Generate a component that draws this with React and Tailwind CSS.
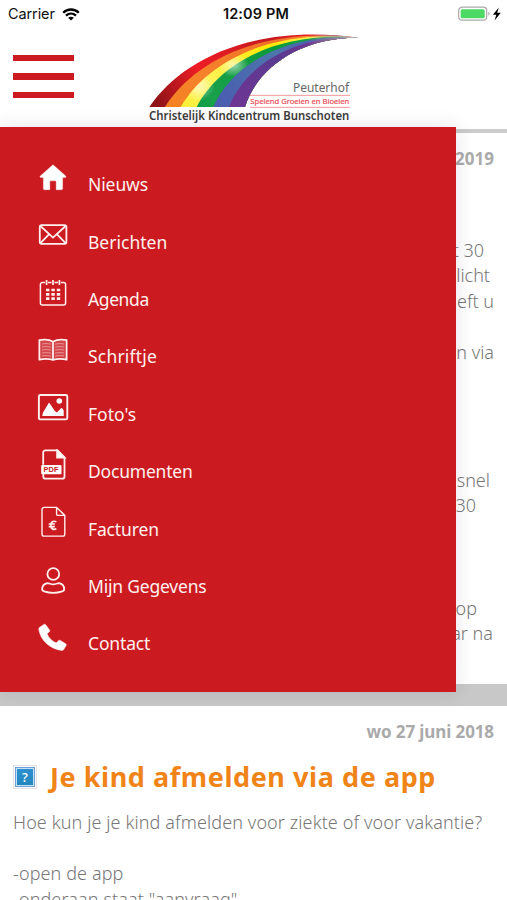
import { clsx } from "clsx";

const BANDS = [
  { id: "red", start: "M28 246C120 110 330 -6 655 38", from: "#8f1418", mid: "#ee1c25", to: "#c41a1f" },
  { id: "orange", start: "M75 246C158 114 355 2 655 38", from: "#f58220", mid: "#f5822a", to: "#f2702a" },
  { id: "yellow", start: "M122 246C197 117 380 10 655 38", from: "#ffec1a", mid: "#fff35c", to: "#ffe800" },
  { id: "green", start: "M170 246C235 120 405 17 655 38", from: "#009640", mid: "#18a04a", to: "#0c9a3c" },
  { id: "blue", start: "M220 246C273 123 430 24 655 38", from: "#3f57a8", mid: "#4a5bb0", to: "#4d76ac" },
  { id: "purple", start: "M267 246C312 127 455 30 655 38", from: "#8a35a0", mid: "#733494", to: "#5a3a90" },
];

function Logo() {
  return (
    <svg viewBox="0 0 690 306" className="h-[102px] w-[230px]">
      <defs>
        {BANDS.map((b) => (
          <linearGradient key={b.id} id={b.id} gradientUnits="userSpaceOnUse" x1="60" y1="250" x2="520" y2="20">
            <stop offset="0" stopColor={b.from} />
            <stop offset="0.3" stopColor={b.mid} />
            <stop offset="0.75" stopColor={b.to} />
            <stop offset="1" stopColor={b.mid} />
          </linearGradient>
        ))}
        <radialGradient id="shine">
          <stop offset="0" stopColor="#fff" stopOpacity="0.6" />
          <stop offset="1" stopColor="#fff" stopOpacity="0" />
        </radialGradient>
        <linearGradient id="tip" gradientUnits="userSpaceOnUse" x1="500" y1="0" x2="655" y2="0">
          <stop offset="0" stopColor="#999" stopOpacity="0" />
          <stop offset="0.6" stopColor="#999" stopOpacity="0.8" />
          <stop offset="1" stopColor="#ccc" />
        </linearGradient>
        <clipPath id="glow">
          <path d="M122 246C197 117 380 10 655 38C430 24 273 123 220 246Z" />
        </clipPath>
      </defs>
      {BANDS.map((b) => (
        <path key={b.id} d={`${b.start}C480 36 350 130 315 246Z`} fill={`url(#${b.id})`} />
      ))}
      <g clipPath="url(#glow)">
        <ellipse cx="175" cy="185" rx="48" ry="42" fill="url(#shine)" />
        <ellipse cx="280" cy="120" rx="46" ry="36" fill="url(#shine)" />
      </g>
      <path d="M28 246C120 110 330 -6 655 38C480 36 350 130 315 246Z" fill="url(#tip)" />
      <g fontFamily="'Noto Sans', sans-serif">
        <text x="459" y="200" fontSize="39" fill="#666" textLength="168" lengthAdjust="spacingAndGlyphs">
          Peuterhof
        </text>
        <path d="M330 211H630M330 247H630" stroke="#f0838a" strokeWidth="2.5" />
        <text x="331" y="237" fontSize="23" fill="#e8505a" stroke="#e8505a" strokeWidth="0.6" textLength="297" lengthAdjust="spacingAndGlyphs">
          Spelend Groeien en Bloeien
        </text>
        <text x="27" y="286" fontSize="36" fontWeight="600" fill="#3c3c3c" textLength="601" lengthAdjust="spacingAndGlyphs">
          Christelijk Kindcentrum Bunschoten
        </text>
      </g>
    </svg>
  );
}

function StatusBar() {
  return (
    <div className="grid h-7 grid-cols-3 items-center pr-[5px] pl-2 font-['Inter',sans-serif] text-[#111]">
      <div className="flex items-center gap-[7px] text-[14.5px] tracking-[-0.1px]">
        Carrier
        <svg viewBox="0 0 18 13" className="h-[13px] w-[18px]" fill="none" stroke="#000" strokeWidth="2.3">
          <path d="M1.2 4.7C5.5.4 12.5.4 16.8 4.7M4 7.7c2.9-2.7 7.1-2.7 10 0" />
          <path d="M9 12.5 6.2 9.8c1.6-1.4 4-1.4 5.6 0Z" fill="#000" stroke="none" />
        </svg>
      </div>
      <div className="pl-[2px] text-center text-[14.5px] font-semibold tracking-[0.15px] whitespace-nowrap">12:09 PM</div>
      <svg viewBox="0 0 44 16" className="h-4 w-11 justify-self-end">
        <rect x=".7" y="1.2" width="28" height="13" rx="3.5" fill="#fff" stroke="#aaa" strokeWidth="1.2" />
        <rect x="2.7" y="3.2" width="24" height="9" rx="1.5" fill="#4cd964" />
        <path d="M30.3 5.6v4.2c1.8-.8 1.8-3.4 0-4.2Z" fill="#aaa" />
        <path d="m40.8 1.5-5.9 7.2h3.4l-1.7 5.8 6.2-7.7h-3.6Z" fill="#000" />
      </svg>
    </div>
  );
}

const icons = {
  home: (
    <path d="M16 2.8 3.3 14c-.5.6-.2 1.4.6 1.4h2.5v11.2c0 .7.4 1.1 1.1 1.1h5.3v-8c0-.6.3-.9.9-.9h4.6c.6 0 .9.3.9.9v8h5.3c.7 0 1.1-.4 1.1-1.1V15.4h2.5c.8 0 1.1-.8.6-1.4Z" fill="#fff" stroke="#fff" strokeWidth="0.4" />
  ),
  mail: (
    <>
      <rect x="2.8" y="6.2" width="26.6" height="18.6" rx="1.8" />
      <path d="m3.4 7 12.6 11.6L28.6 7M3.4 24.2l8.8-9.1M28.6 24.2l-8.8-9.1" strokeWidth="1.8" />
    </>
  ),
  calendar: (
    <>
      <path d="M8.2 5.4H5.4a2 2 0 0 0-2 2V26a2 2 0 0 0 2 2h21.2a2 2 0 0 0 2-2V7.4a2 2 0 0 0-2-2h-2.8M11 5.4h3.5M17.5 5.4h3.5" strokeWidth="1.5" />
      <path d="M9.6 3v5M16 3v5M22.4 3v5" strokeWidth="1.7" />
      <path d="M9 13h14.2M9 17.3h14.2M9 21.6h14.2" strokeWidth="2.7" strokeDasharray="3.4 2" />
    </>
  ),
  book: (
    <>
      <path d="M16 7.8C12 5.2 7 5.4 2.4 6.2v19.3c4.6-.8 9.4-1 13.6.4 4.2-1.4 9-1.2 13.6-.4V6.2C25 5.4 20 5.2 16 7.8v18" />
      <path d="M3.5 7.2c4-.7 8-.6 11.5 1.2v15.8c-3.5-1-7.5-.9-11.5-.2ZM28.5 7.2c-4-.7-8-.6-11.5 1.2v15.8c3.5-1 7.5-.9 11.5-.2Z" fill="#fff" stroke="none" opacity="0.2" />
      <path d="M5 10c3-.6 6-.5 8.8.2M5 13c3-.6 6-.5 8.8.2M5 16c3-.6 6-.5 8.8.2M5 19c3-.6 6-.5 8.8.2M5 22c3-.6 6-.5 8.8.2M18.2 10.2c2.8-.7 5.8-.8 8.8-.2M18.2 13.2c2.8-.7 5.8-.8 8.8-.2M18.2 16.2c2.8-.7 5.8-.8 8.8-.2M18.2 19.2c2.8-.7 5.8-.8 8.8-.2M18.2 22.2c2.8-.7 5.8-.8 8.8-.2" strokeWidth="1" opacity="0.45" />
    </>
  ),
  photo: (
    <>
      <rect x="1.9" y="4" width="28.4" height="24.4" rx="1.5" strokeWidth="1.9" />
      <path d="m5.3 25 .6-3.2 5.5-9.4c.5-.8.9-.8 1.4 0l5 7.7 2 1.4 4.3-4.2c.6-.6 1-.5 1.4.2l1.2 2V25Z" fill="#fff" stroke="none" />
      <circle cx="22.3" cy="10" r="2.8" fill="#fff" stroke="none" />
    </>
  ),
  pdf: (
    <g transform="translate(0.6 -1.2)">
      <path d="M5.6 17V4.8a2.3 2.3 0 0 1 2.3-2.3h12l7 7.1v19a2.3 2.3 0 0 1-2.3 2.3H8a2.3 2.3 0 0 1-2.3-2.3V26" strokeWidth="1.8" />
      <path d="M19.5 2.5v7.3h7.4Z" fill="#fff" />
      <rect x="3.6" y="17.1" width="20.3" height="9.3" rx="1" fill="#fff" stroke="none" />
      <text x="5.9" y="24.6" fill="#cb1b20" stroke="none" fontSize="7.5" fontWeight="700" fontFamily="'Liberation Sans', sans-serif" textLength="15" lengthAdjust="spacingAndGlyphs">
        PDF
      </text>
    </g>
  ),
  invoice: (
    <g transform="translate(0.4 -0.9)">
      <path d="M19.2 2.3H6.8A2.2 2.2 0 0 0 4.6 4.5v24.3A2.2 2.2 0 0 0 6.8 31h18.4a2.2 2.2 0 0 0 2.2-2.2V10.3Zm0 0v6.5c0 1 .5 1.5 1.5 1.5h6.7" strokeWidth="1.4" />
      <path d="M19 16.7c-4-1.7-5.6 1-5.6 3.6s2 5.1 5.6 3.4M11.3 18.9h6.2M11.3 21.5h6.2" strokeWidth="1.7" />
    </g>
  ),
  user: (
    <>
      <circle cx="16.3" cy="10" r="5.9" strokeWidth="1.8" />
      <path d="M10.5 19.2c-3.4.6-5.3 3.4-5.3 6.2 0 1.5 4 3.4 11 3.4s11-1.9 11-3.4c0-2.8-1.9-5.6-5.3-6.2-1.8 0-3.5 1.2-5.7 1.2s-3.9-1.2-5.7-1.2Z" strokeWidth="1.8" />
    </>
  ),
  phone: (
    <path transform="translate(0.2 1.6)" d="M3 4.3 6.7 1.8c.7-.4 1.3-.3 1.8.4l3.8 5.2c.5.7.4 1.4-.3 1.9l-2 1.5c.6 3.4 5 8.2 9.3 9.4l1.8-2.1c.6-.6 1.2-.7 1.9-.3l5.5 3.4c.7.5.8 1 .4 1.7l-2.4 4c-.5.8-1.3 1-2.3.9C12.3 26.3 3.3 17.5 1.6 7c-.1-1.2.2-2 1.4-2.7Z" fill="#fff" stroke="#fff" strokeWidth="0.5" />
  ),
};

const menuItems = [
  { title: "Nieuws", icon: "home", spacing: "tracking-[-0.1px]" },
  { title: "Berichten", icon: "mail", spacing: "tracking-normal" },
  { title: "Agenda", icon: "calendar", spacing: "tracking-[-0.4px]" },
  { title: "Schriftje", icon: "book", spacing: "tracking-[0.2px]" },
  { title: "Foto's", icon: "photo", spacing: "tracking-normal" },
  { title: "Documenten", icon: "pdf", spacing: "tracking-[-0.2px]" },
  { title: "Facturen", icon: "invoice", spacing: "tracking-[-0.15px]" },
  { title: "Mijn Gegevens", icon: "user", spacing: "tracking-[-0.2px]" },
  { title: "Contact", icon: "phone", spacing: "tracking-[-0.15px]" },
];

function Menu() {
  return (
    <nav className="absolute top-[127px] left-0 h-[565px] w-[456px] bg-[#cb1b20] pt-[28.7px] shadow-[0_0_18px_rgba(40,20,60,0.12)]">
      {menuItems.map((item) => (
        <a key={item.title} className="flex h-[57.4px] items-center pl-[37px] text-[17.5px] text-[#fff0ee]">
          <svg viewBox="0 0 32 32" className="mr-[19px] mb-[13px] size-8" fill="none" stroke="#fff0ee" strokeWidth="1.8">
            {icons[item.icon]}
          </svg>
          <span className={clsx("whitespace-nowrap", item.spacing)}>{item.title}</span>
        </a>
      ))}
    </nav>
  );
}

// Regels van het eerste bericht, lege regels houden de witruimte vast
const newsLines = [
  { text: "t 30", end: "pr-[23px]" },
  { text: "licht", end: "pr-[17px]" },
  { text: "eft u", end: "pr-[13px]" },
  {},
  { text: "n via", end: "pr-[13px]" },
  {},
  {},
  {},
  {},
  { text: "snel", end: "pr-[17px]" },
  { text: "30", end: "pr-[31px]" },
  {},
  {},
  {},
  { text: "op", end: "pr-[30px]" },
  { text: "ar na", end: "pr-[14px]" },
];

export default function App() {
  return (
    <div className="relative h-[900px] w-[507px] overflow-hidden bg-white font-['Noto_Sans',sans-serif]">
      <StatusBar />
      <header className="flex h-[101px] items-start">
        <button className="mt-[26.5px] ml-[13px] flex w-[61px] flex-col gap-3">
          <span className="h-[6.5px] bg-[#cb1b20]" />
          <span className="h-[6.5px] bg-[#cb1b20]" />
          <span className="h-[6.5px] bg-[#cb1b20]" />
        </button>
        <div className="-mt-[3px] ml-[66px]">
          <Logo />
        </div>
      </header>

      <article className="h-[555px] border-t-4 border-[#cbcbcb] text-right text-[18px] text-[#777]">
        <div className="pt-[13px] pr-[13px] text-[17px] leading-[26px] font-bold text-[#aaa]">2019</div>
        <div className="pt-[65.5px] leading-[25.6px] font-light">
          {newsLines.map((line, i) => (
            <p key={i} className={clsx("h-[25.6px]", line.end)}>
              {line.text}
            </p>
          ))}
        </div>
      </article>
      <div className="h-[22px] bg-[#c8c8c8]" />

      <article className="px-[13px]">
        <div className="pt-[13px] text-right text-[17px] leading-[26px] font-bold tracking-[-0.1px] text-[#aaa]">
          wo 27 juni 2018
        </div>
        <div className="flex h-[38px] items-center pt-[26px]">
          <div className="flex size-6 shrink-0 items-center justify-center border border-[#e4e4e6] bg-[#fbfbfb]">
            <div className="flex size-5 items-center justify-center border border-[#6f9fd8] bg-[#c4e2f6]">
              <div className="flex size-4 items-center justify-center bg-linear-to-b from-[#2f8fd0] to-[#2387bd] text-[13px] leading-none font-medium text-white">
                ?
              </div>
            </div>
          </div>
          <h2 className="ml-[13px] text-[27px] leading-9 font-bold tracking-[0.57px] whitespace-nowrap text-[#f08418]">
            Je kind afmelden via de app
          </h2>
        </div>
        <div className="pt-[27px] text-[18px] leading-[25.6px] font-light tracking-[0.11px] whitespace-nowrap text-[#777]">
          <p>Hoe kun je je kind afmelden voor ziekte of voor vakantie?</p>
          <p className="h-[25.6px]" />
          <p>-open de app</p>
          <p>-onderaan staat "aanvraag"</p>
        </div>
      </article>

      <Menu />
    </div>
  );
}
